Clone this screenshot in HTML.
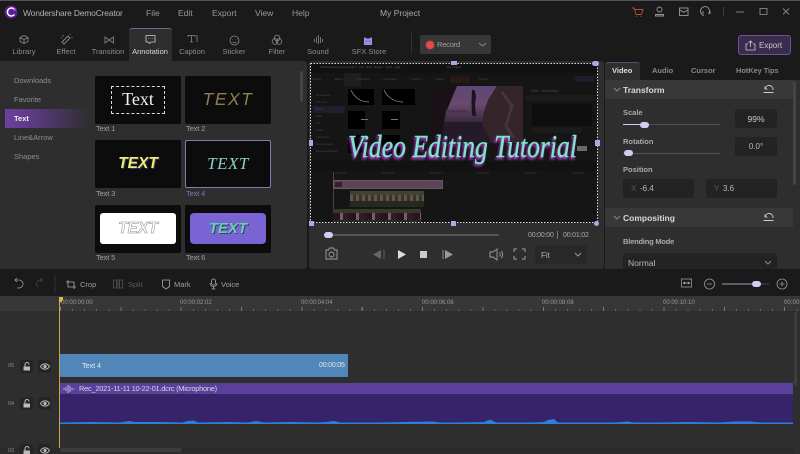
<!DOCTYPE html>
<html><head><meta charset="utf-8">
<style>
html,body{margin:0;padding:0;background:#1a1a1b;}
#p{position:relative;width:800px;height:454px;overflow:hidden;background:#1a1a1b;font-family:"Liberation Sans",sans-serif;font-size:8px;color:#a8a8a8;}
#p div{position:absolute;white-space:nowrap;box-sizing:border-box;}
#p svg{position:absolute;overflow:visible;}
.m{top:8px;font-size:8.5px;color:#999;line-height:11px;}
.t{top:47px;width:44px;text-align:center;font-size:7.5px;color:#8c8c8c;line-height:10px;}
.s{left:14px;font-size:7.5px;color:#8e8e8e;line-height:10px;}
.th{width:86px;height:48px;background:#0c0c0c;border-radius:2px;}
.tl{font-size:7.5px;color:#a0a0a0;line-height:10px;letter-spacing:-.15px;}
.b{font-size:7.5px;font-weight:bold;color:#d0d0d0;line-height:10px;}
.box{background:#232323;border-radius:2px;}
.r{top:299px;font-size:6px;color:#9a9a9a;line-height:8px;}
.ln{width:13px;height:13px;background:#242424;border-radius:3px;}
.h{background:#b8a2e6;width:5px;height:5px;}
</style></head><body><div id="p">
<div style="left:0;top:0;width:800px;height:1px;background:#55525c"></div>

<!-- title bar -->
<svg style="left:0;top:0" width="40" height="26"><circle cx="11" cy="12" r="6.5" fill="#5a1f96"/><path d="M14.5 9.5A4 4 0 1 0 14.5 14.5" fill="none" stroke="#fff" stroke-width="1.5"/><circle cx="14.5" cy="9.5" r="1.2" fill="#e060e0"/></svg>
<div style="left:23px;top:7px;font-size:8.5px;color:#b0b0b0;line-height:12px;letter-spacing:-.2px">Wondershare DemoCreator</div>
<div class="m" style="left:146px">File</div><div class="m" style="left:178px">Edit</div><div class="m" style="left:212px">Export</div><div class="m" style="left:255px">View</div><div class="m" style="left:292px">Help</div>
<div class="m" style="left:380px;color:#aaa">My Project</div>
<svg style="left:625px;top:0" width="175" height="26" fill="none" stroke="#999" stroke-width=".9">
<path d="M7 8h2l2 6.500h5.500l1.500-5H10M11 16.500h.8M15.500 16.500h.8" stroke="#c0473f"/>
<circle cx="34.500" cy="9.500" r="2.500"/><path d="M30.500 16v-1.500h8v1.500z"/>
<rect x="54.500" y="8" width="8.500" height="7.500"/><path d="M54.500 10l4.200 2.200L63 10"/>
<path d="M79 15.500A4.500 4.500 0 1 1 83.500 14M78 11v3M85 11v3"/>
<path d="M98.500 7v9" stroke="#444"/><path d="M111 12h8" stroke="#888"/><rect x="135" y="8.500" width="7" height="6" stroke="#888"/><path d="M158 8.500l6 6M164 8.500l-6 6" stroke="#888"/>
</svg>

<!-- tabs -->
<div style="left:129px;top:28px;width:43px;height:34px;background:#2e2e2e;border-top:1px solid #75688e;border-radius:3px 3px 0 0"></div>
<svg style="left:0;top:28px" width="400" height="20" fill="none" stroke="#888" stroke-width=".8">
<path d="M20 9.500l4-2 4 2v4l-4 2-4-2zM20 9.500l4 2 4-2M24 11.500v4"/>
<path d="M62 14l6-6 2 2-6 6zM63 7v1.500M70 6v1M72 9v1M61 10h1" stroke="#999"/>
<path d="M105 9v6l4.500-3zM113.500 9v6l-4.500-3z"/>
<path d="M146 7.500h9v6.500h-4l-1.500 1.500-1-1.500h-2.500zM148.500 10.500h.5M150.500 10.500h.5M152.500 10.500h.5" stroke="#ccc"/>
<path d="M188 9V7.500h7V9M191.500 7.500V14M190 14h3M197 7v7"/>
<circle cx="234.500" cy="12.500" r="4.500"/><path d="M232.500 11.500h.5M236 11.500h.5M232.500 14c1 1 3 1 4 0"/>
<circle cx="277" cy="10" r="2.800"/><circle cx="275" cy="13.500" r="2.800"/><circle cx="279" cy="13.500" r="2.800"/>
<path d="M314.500 11v3M316.500 9v6M318.500 7v9M320.500 9v6M322.500 11v3"/>
</svg>
<svg style="left:363px;top:35px" width="12" height="12"><path d="M1 2.500h1.500l1 1h3l1-1H9v7.500H1z" fill="#a78ae6"/><path d="M3 6h1M6 6h1" stroke="#443366"/></svg>
<div class="t" style="left:2px">Library</div><div class="t" style="left:44px">Effect</div><div class="t" style="left:86px">Transition</div>
<div class="t" style="left:128px;color:#d8d8d8">Annotation</div><div class="t" style="left:170px">Caption</div><div class="t" style="left:212px">Sticker</div><div class="t" style="left:255px">Filter</div><div class="t" style="left:296px">Sound</div><div class="t" style="left:347px;width:44px">SFX Store</div>

<div style="left:411px;top:33px;width:1px;height:20px;background:#333"></div>
<div style="left:420px;top:35px;width:71px;height:19px;background:#373737;border-radius:2px"></div>
<div style="left:426px;top:41px;width:8px;height:8px;background:#e04a4a;border-radius:50%;box-shadow:0 0 0 1px #6b3a3a"></div>
<div style="left:437px;top:40px;font-size:7.5px;color:#a0a0a0;line-height:10px;letter-spacing:-.2px">Record</div>
<svg style="left:478px;top:42px" width="10" height="6"><path d="M1 1l3.500 3L8 1" fill="none" stroke="#888"/></svg>
<div style="left:738px;top:35px;width:53px;height:20px;background:#3a2c4e;border:1px solid #6b5590;border-radius:3px"></div>
<svg style="left:745px;top:40px" width="12" height="11" fill="none" stroke="#ccc" stroke-width=".8"><path d="M3 4H1v6h9V4H8M5.500 7V1M3.500 3l2-2 2 2"/></svg>
<div style="left:759px;top:40px;font-size:8px;color:#c8c8c8;line-height:11px">Export</div>

<!-- library panel -->
<div style="left:0;top:61px;width:307px;height:208px;background:#2e2e2e;border-radius:0 3px 3px 0"></div>
<div style="left:129px;top:60px;width:43px;height:2px;background:#2e2e2e"></div>
<div style="left:5px;top:109px;width:85px;height:19px;background:linear-gradient(90deg,#6f3f9f 0%,#5a3a80 35%,#2e2e2e 100%)"></div>
<div class="s" style="top:76px">Downloads</div><div class="s" style="top:95px">Favorite</div><div class="s" style="top:114px;color:#eee;font-weight:bold">Text</div><div class="s" style="top:133px">Line&amp;Arrow</div><div class="s" style="top:152px">Shapes</div>
<div style="left:300px;top:71px;width:3px;height:31px;background:#444;border-radius:2px"></div>

<div class="th" style="left:95px;top:76px"></div>
<div style="left:111px;top:86px;width:54px;height:28px;border:1px dashed #ddd"></div>
<div style="left:95px;top:89px;width:86px;text-align:center;font:18px/20px 'Liberation Serif',serif;color:#f2f2f2">Text</div>
<div class="th" style="left:185px;top:76px"></div>
<div style="left:185px;top:89px;width:86px;text-align:center;font:italic 17.5px/21px 'Liberation Sans',sans-serif;letter-spacing:1.5px;color:#8f7f50">TEXT</div>
<div class="th" style="left:95px;top:140px"></div>
<div style="left:95px;top:154px;width:86px;text-align:center;font:italic bold 15.5px/19px 'Liberation Sans',sans-serif;color:#f0ec70;text-shadow:1px 1px 0 #333060">TEXT</div>
<div class="th" style="left:185px;top:140px;border:1px solid #8d72b6"></div>
<div style="left:185px;top:154px;width:86px;text-align:center;font:italic 17px/20px 'Liberation Serif',serif;color:#8fd0c6;letter-spacing:.5px">TEXT</div>
<div class="th" style="left:95px;top:205px"></div>
<div style="left:100px;top:213px;width:76px;height:31px;background:#fff;border-radius:3px"></div>
<div style="left:95px;top:219px;width:86px;text-align:center;font:italic bold 15.5px/19px 'Liberation Sans',sans-serif;color:#fff;-webkit-text-stroke:.5px #888">TEXT</div>
<div class="th" style="left:185px;top:205px"></div>
<div style="left:190px;top:213px;width:76px;height:31px;background:#7a63d2;border-radius:4px"></div>
<div style="left:185px;top:219px;width:86px;text-align:center;font:italic bold 15px/19px 'Liberation Sans',sans-serif;color:#62d5a6;text-shadow:1px 1px 0 #3b3a80">TEXT</div>
<div class="tl" style="left:96px;top:124px">Text 1</div><div class="tl" style="left:186px;top:124px">Text 2</div>
<div class="tl" style="left:96px;top:189px">Text 3</div><div class="tl" style="left:186px;top:189px;color:#8a6fb5">Text 4</div>
<div class="tl" style="left:96px;top:253px">Text 5</div><div class="tl" style="left:186px;top:253px">Text 6</div>

<!-- preview -->
<div style="left:309px;top:61px;width:295px;height:208px;background:#2e2e2e;border-radius:3px"></div>
<div style="left:310px;top:63px;width:288px;height:160px;background:#151515"></div>
<div style="left:310px;top:63px;width:288px;height:10px;background:#111"></div>
<div style="left:320px;top:65px;font-size:3px;color:#555;line-height:5px">Wondershare DemoCreator &nbsp; File &nbsp; Edit &nbsp; Export &nbsp; View &nbsp; Help</div>
<div style="left:447px;top:65px;font-size:3px;color:#555;line-height:5px">My Project</div>
<div style="left:344px;top:73px;width:17px;height:13px;background:#1e1e1e"></div>
<div style="left:312px;top:77px;font-size:3px;color:#484848;line-height:4px;word-spacing:13px">Library Effect Transition Annotation Caption Sticker Filter Sound</div>
<div style="left:450px;top:76px;width:20px;height:7px;background:#2a1818"></div>
<div style="left:575px;top:76px;width:19px;height:6px;background:#211c2c"></div>
<div style="left:313px;top:106px;width:32px;height:7px;background:#241d2e"></div>
<div style="left:316px;top:92px;font-size:3px;line-height:7px;color:#444;white-space:pre">Downloads
Favorite
Basic
Slide
Pan
Warp
Transition
Speed Ramp
Repeated Action</div>
<div style="left:348px;top:89px;width:26px;height:16px;background:#000"></div>
<div style="left:382px;top:89px;width:33px;height:16px;background:#000"></div>
<svg style="left:348px;top:89px" width="70" height="16" fill="none" stroke="#999" stroke-width=".7"><path d="M3 1C6 8 12 13 21 13M36 1C39 8 46 13 55 13"/></svg>
<div style="left:348px;top:111px;width:17px;height:18px;background:#000"></div><div style="left:382px;top:111px;width:18px;height:18px;background:#000"></div>
<div style="left:361px;top:119px;width:7px;height:1px;background:#777"></div><div style="left:391px;top:119px;width:7px;height:1px;background:#777"></div>
<div style="left:348px;top:135px;width:17px;height:18px;background:#000"></div><div style="left:382px;top:135px;width:18px;height:18px;background:#000"></div>

<svg style="left:432px;top:86px" width="91" height="57">
<defs><linearGradient id="g" x1="0" y1="0" x2="0" y2="1"><stop offset="0" stop-color="#5e4678"/><stop offset=".5" stop-color="#6a4a6e"/><stop offset="1" stop-color="#3a2a3c"/></linearGradient></defs>
<rect width="91" height="57" fill="#2a2024"/>
<path d="M25 0H65L56 14 52 26 50 36H10L14 26 20 12z" fill="url(#g)"/>
<path d="M10 36H50L56 46 62 57H8z" fill="#241a28"/>
<path d="M65 0H91V57H60L50 38 52 26 56 14z" fill="#33252a"/>
<path d="M70 6l10 14-6 20 8 12" stroke="#46343a" stroke-width="3" fill="none"/>
<path d="M0 0H25L14 26 8 57H0z" fill="#181216"/>
<path d="M40 4h2.500l1.500 6-1 10 1 10h-4l-.5-14z" fill="#1c141c"/>
<path d="M13 24h20l6 3H16zM16 29h24l2 2H18z" fill="#4a3450"/>
</svg>

<div style="left:530px;top:89px;font-size:3.5px;color:#4a4a4a;line-height:5px">Video &nbsp; Annotation</div>
<div style="left:525px;top:95px;width:70px;height:6px;background:#1b1b1b"></div>
<div style="left:532px;top:104px;width:60px;height:22px;background:#0e0e0e"></div>
<div style="left:532px;top:128px;width:50px;height:5px;background:#1b1b1b"></div>
<div style="left:577px;top:146px;width:10px;height:5px;background:#6a6a6a"></div>

<div style="left:310px;top:161px;width:288px;height:10px;background:#121212"></div>
<div style="left:333px;top:172px;width:1px;height:50px;background:#4a4236"></div>
<div style="left:335px;top:171px;font-size:3px;color:#3c3c3c;line-height:5px;word-spacing:35px">00:00:00 00:00:02 00:00:04 00:00:06 00:00:08 00:00:10</div>
<div style="left:333px;top:180px;width:110px;height:9px;background:#5c4356;border:1px solid #6d5266"></div>
<div style="left:335px;top:182px;width:7px;height:5px;background:#33222e"></div>
<div style="left:350px;top:191px;width:74px;height:16px;background:#252a1d"></div>
<div style="left:350px;top:191px;width:74px;height:4px;background:#3f442f"></div>
<div style="left:350px;top:195px;width:74px;height:6px;background:repeating-linear-gradient(90deg,#605450 0 3px,#3a3229 3px 6px)"></div>
<div style="left:333px;top:209px;width:88px;height:4px;background:#363a2a"></div>
<div style="left:333px;top:213px;width:88px;height:7px;background:repeating-linear-gradient(90deg,#2a141c 0 7px,#70606a 7px 10px,#341a24 10px 16px)"></div>
<div style="left:333px;top:220px;width:88px;height:2px;background:#252a1d"></div>

<svg style="left:310px;top:63px" width="288" height="160">
<defs><filter id="gl" x="-10%" y="-30%" width="120%" height="160%"><feGaussianBlur stdDeviation="1"/></filter></defs>
<text x="38" y="95" font-family="Liberation Serif,serif" font-style="italic" font-size="32" textLength="229" lengthAdjust="spacingAndGlyphs" fill="#a032b0" stroke="#a032b0" stroke-width="1" filter="url(#gl)" dx="-1" dy="1">Video Editing Tutorial</text>
<text x="38" y="94" font-family="Liberation Serif,serif" font-style="italic" font-size="32" textLength="229" lengthAdjust="spacingAndGlyphs" fill="#7fe3d0" stroke="#7fe3d0" stroke-width=".4">Video Editing Tutorial</text>
<rect x=".5" y=".5" width="287" height="159" fill="none" stroke="#e0e0e0" stroke-width="1" stroke-dasharray="1.5 1.5"/>
</svg>
<div class="h" style="left:451px;top:61px;height:4px;width:6px"></div>
<div class="h" style="left:592px;top:61px;border-radius:3px;width:7px"></div>
<div class="h" style="left:309px;top:140px;width:4px;height:6px"></div>
<div class="h" style="left:595px;top:140px;width:5px;height:6px"></div>
<div class="h" style="left:309px;top:221px"></div>
<div class="h" style="left:451px;top:221px"></div>
<div class="h" style="left:594px;top:221px;border-radius:3px"></div>

<div style="left:325px;top:234px;width:174px;height:2px;background:#555"></div>
<div style="left:324px;top:232px;width:9px;height:6px;background:#d6c9f4;border-radius:3px"></div>
<div style="left:528px;top:230px;font-size:7px;color:#a8a8a8;line-height:11px;letter-spacing:-.2px">00:00:00</div>
<div style="left:557px;top:231px;width:1px;height:8px;background:#777"></div>
<div style="left:563px;top:230px;font-size:7px;color:#a8a8a8;line-height:11px;letter-spacing:-.2px">00:01:02</div>
<svg style="left:320px;top:244px" width="200" height="20" fill="none" stroke="#a0a0a0" stroke-width=".9">
<path d="M6 6h2.500l1-2h4l1 2H17v9H6z"/><circle cx="11.500" cy="10.500" r="2.500"/>
<path d="M61 6v9l-8-4.500z" fill="#666" stroke="none"/><path d="M64 6v9" stroke="#666"/>
<path d="M78 6v9l8-4.500z" fill="#ddd" stroke="none"/>
<rect x="100" y="7" width="7" height="7" fill="#ccc" stroke="none"/>
<path d="M125 6v9l8-4.500z" fill="#999" stroke="none"/><path d="M123 6v9" stroke="#999"/>
<path d="M170 8h3l4-3v11l-4-3h-3zM179.500 8.500c1 1 1 3 0 4M181.500 7c1.500 2 1.500 5 0 7"/>
</svg>
<svg style="left:513px;top:248px" width="14" height="13" fill="none" stroke="#a0a0a0"><path d="M1 4V1h3M9 1h3v3M12 8v3H9M4 11H1V8"/></svg>
<div style="left:535px;top:245px;width:52px;height:19px;background:#282828;border-radius:2px"></div>
<div style="left:541px;top:250px;font-size:8px;color:#b0b0b0;line-height:11px">Fit</div>
<svg style="left:574px;top:252px" width="9" height="6"><path d="M1 1l3 3 3-3" fill="none" stroke="#999"/></svg>

<!-- right panel -->
<div style="left:605px;top:80px;width:195px;height:189px;background:#2e2e2e"></div>
<div style="left:605px;top:62px;width:35px;height:19px;background:#2e2e2e;border-top:1px solid #56506a;border-radius:3px 3px 0 0"></div>
<div class="b" style="left:612px;top:66px;color:#ddd">Video</div>
<div class="b" style="left:652px;top:66px;color:#888">Audio</div>
<div class="b" style="left:691px;top:66px;color:#888">Cursor</div>
<div class="b" style="left:736px;top:66px;color:#888;letter-spacing:-.1px">HotKey Tips</div>
<div style="left:605px;top:80px;width:188px;height:19px;background:#383838"></div>
<div style="left:605px;top:208px;width:188px;height:19px;background:#383838"></div>
<svg style="left:613px;top:87px" width="8" height="6"><path d="M1 1l3 3 3-3" fill="none" stroke="#888"/></svg>
<svg style="left:613px;top:215px" width="8" height="6"><path d="M1 1l3 3 3-3" fill="none" stroke="#888"/></svg>
<div style="left:623px;top:84px;font-size:8.5px;font-weight:bold;color:#d8d8d8;line-height:12px">Transform</div>
<div style="left:623px;top:212px;font-size:8.5px;font-weight:bold;color:#d8d8d8;line-height:12px">Compositing</div>
<svg style="left:763px;top:84px" width="12" height="11" fill="none" stroke="#ccc" stroke-width=".9"><path d="M2 5a4 4 0 0 1 8 1M.5 8.500h10M2 2.500V5h2.500"/></svg>
<svg style="left:763px;top:212px" width="12" height="11" fill="none" stroke="#ccc" stroke-width=".9"><path d="M2 5a4 4 0 0 1 8 1M.5 8.500h10M2 2.500V5h2.500"/></svg>
<div style="left:793px;top:81px;width:3px;height:104px;background:#444;border-radius:2px"></div>
<div class="b" style="left:623px;top:108px;color:#aaa">Scale</div>
<div style="left:623px;top:124px;width:97px;height:1px;background:#505050"></div>
<div style="left:623px;top:124px;width:20px;height:1px;background:#d6c9f4"></div>
<div style="left:640px;top:122px;width:9px;height:6px;background:#d6c9f4;border-radius:3px"></div>
<div class="box" style="left:735px;top:109px;width:42px;height:19px"></div>
<div style="left:735px;top:113px;width:42px;text-align:center;font-size:8.5px;color:#c8c8c8;line-height:12px">99%</div>
<div class="b" style="left:623px;top:137px;color:#aaa">Rotation</div>
<div style="left:623px;top:153px;width:97px;height:1px;background:#505050"></div>
<div style="left:624px;top:150px;width:9px;height:6px;background:#d6c9f4;border-radius:3px"></div>
<div class="box" style="left:735px;top:137px;width:42px;height:19px"></div>
<div style="left:735px;top:141px;width:42px;text-align:center;font-size:8px;color:#b8b8b8;line-height:12px">0.0°</div>
<div class="b" style="left:623px;top:165px;color:#aaa">Position</div>
<div class="box" style="left:623px;top:179px;width:71px;height:19px"></div>
<div class="box" style="left:706px;top:179px;width:71px;height:19px"></div>
<div style="left:631px;top:183px;font-size:8px;color:#555;line-height:12px">X</div>
<div style="left:640px;top:183px;font-size:8px;color:#b8b8b8;line-height:12px">-6.4</div>
<div style="left:714px;top:183px;font-size:8px;color:#555;line-height:12px">Y</div>
<div style="left:723px;top:183px;font-size:8px;color:#b8b8b8;line-height:12px">3.6</div>
<div class="b" style="left:623px;top:237px;color:#aaa;letter-spacing:-.2px">Blending Mode</div>
<div class="box" style="left:623px;top:253px;width:154px;height:16px"></div>
<div style="left:628px;top:257px;font-size:8.5px;color:#b8b8b8;line-height:12px">Normal</div>
<svg style="left:764px;top:260px" width="9" height="6"><path d="M1 1l3 3 3-3" fill="none" stroke="#888"/></svg>

<!-- timeline toolbar -->
<svg style="left:0;top:270px" width="260" height="26" fill="none" stroke="#999" stroke-width=".8">
<path d="M15 10h4a4 4 0 0 1 0 8h-2M17 8L15 10 17 12"/>
<path d="M42 10h-1a4 4 0 0 0-3 7M40.500 8.500l1.500 1.500-1.500 1.500" stroke="#4a4a4a"/>
<path d="M55 5v18" stroke="#3a3a3a"/>
<path d="M66 12h8v7M68 10v7h8" stroke="#aaa"/>
<path d="M113.500 10h3v8h-3zM119.500 10h3v8h-3zM118 9v10" stroke="#555"/>
<path d="M162.500 10h7v6.500l-3.500 2.500-3.500-2.500z" stroke="#aaa"/>
<rect x="211.500" y="9" width="4" height="6" rx="2" stroke="#aaa"/><path d="M210 13a3.500 3.500 0 0 0 7 0M213.500 16.500v2.500M211.500 19h4" stroke="#aaa"/>
</svg>
<div style="left:80px;top:279px;font-size:7.5px;color:#a0a0a0;line-height:11px">Crop</div>
<div style="left:128px;top:279px;font-size:7.5px;color:#5c5c5c;line-height:11px">Split</div>
<div style="left:174px;top:279px;font-size:7.5px;color:#a0a0a0;line-height:11px">Mark</div>
<div style="left:221px;top:279px;font-size:7.5px;color:#a0a0a0;line-height:11px">Voice</div>
<svg style="left:680px;top:274px" width="120" height="20" fill="none" stroke="#999" stroke-width=".8">
<rect x="1.500" y="5" width="10" height="8"/><path d="M3.500 9h6M4.500 8l-1 1 1 1M8.500 8l1 1-1 1" stroke="#ccc"/>
<circle cx="29.500" cy="10" r="5"/><path d="M27 10h5"/>
<path d="M42 10h30" stroke="#d6c9f4"/><path d="M76 10h13" stroke="#555"/>
<circle cx="102" cy="10" r="5"/><path d="M99.500 10h5M102 7.500v5"/></svg>
<div style="left:752px;top:281px;width:9px;height:6px;background:#d6c9f4;border-radius:3px"></div>

<!-- timeline -->
<div style="left:0;top:296px;width:800px;height:158px;background:#2e2e2e"></div>
<div style="left:0;top:296px;width:800px;height:15px;background:#373737"></div>
<div style="left:60px;top:309px;width:740px;height:2px;background:repeating-linear-gradient(90deg,#666 0 1px,transparent 1px 12.07px)"></div>
<div style="left:60px;top:307px;width:740px;height:4px;background:repeating-linear-gradient(90deg,#777 0 1px,transparent 1px 60.35px)"></div>
<div class="r" style="left:61px">00:00:00:00</div><div class="r" style="left:180px">00:00:02:02</div><div class="r" style="left:301px">00:00:04:04</div><div class="r" style="left:422px">00:00:06:06</div><div class="r" style="left:542px">00:00:08:08</div><div class="r" style="left:663px">00:00:10:10</div><div class="r" style="left:784px">00:00:</div>

<div style="left:60px;top:354px;width:288px;height:23px;background:#5087b8;border-radius:1px"></div>
<div style="left:82px;top:361px;font-size:7.5px;color:#dfe8f0;line-height:10px;letter-spacing:-.2px">Text 4</div>
<div style="left:319px;top:361px;font-size:7px;color:#dfe8f0;line-height:10px;letter-spacing:-.2px">00:00:05</div>
<div style="left:60px;top:383px;width:733px;height:11px;background:#5a4098"></div>
<div style="left:60px;top:394px;width:733px;height:30px;background:#36246a"></div>
<svg style="left:63px;top:385px" width="12" height="8" stroke="#d8d0ee" stroke-width=".8"><path d="M1 3v2M3 2v4M5 0v8M7 1v6M9 3v2M11 3.500v1"/></svg>
<div style="left:79px;top:384px;font-size:7.5px;color:#d8d4e6;line-height:10px;letter-spacing:-.28px">Rec_2021-11-11 10-22-01.dcrc (Microphone)</div>
<svg style="left:60px;top:418px" width="733" height="6"><path fill="#2f7fd8" d="M0 6V4.500L30 4 60 4.500 66 3.500 70 3 74 4 100 4 122 4.500 128 3 134 2.500 138 4.500 170 4 188 4.500 196 3 204 4.500 230 4 258 4.500 266 4 274 3 280 4.500 320 4.500 344 4 372 3.500 380 4.500 400 4.500 424 4 430 1.500 436 4.500 470 4.500 484 4 488 2 494 1 498 4.500 520 4.500 555 4.500 568 3.500 574 4.500 600 4.500 628 4 660 4.500 674 3.500 690 3.500 700 4.500 733 4.500V6z"/></svg>
<div style="left:59px;top:298px;width:1px;height:150px;background:#c9a24a"></div>
<svg style="left:59px;top:297px" width="5" height="6"><path d="M0 0h4v3L1.500 5.500 0 5z" fill="#e0b54e"/></svg>
<div style="left:0;top:448px;width:794px;height:5px;background:#2a2a2a"></div>
<div style="left:60px;top:448px;width:122px;height:4px;background:#3d3d3d;border-radius:2px"></div>
<div style="left:794px;top:312px;width:3px;height:74px;background:#3d3d3d;border-radius:2px"></div>

<div style="left:8px;top:362px;font-size:5.5px;color:#8a8a8a;line-height:8px">05</div>
<div style="left:8px;top:400px;font-size:5.5px;color:#8a8a8a;line-height:8px">04</div>
<div style="left:8px;top:447px;font-size:5.5px;color:#8a8a8a;line-height:8px">03</div>
<div class="ln" style="left:20px;top:360px"></div><div class="ln" style="left:38px;top:360px"></div>
<div class="ln" style="left:20px;top:397px"></div><div class="ln" style="left:38px;top:397px"></div>
<div class="ln" style="left:20px;top:444px"></div><div class="ln" style="left:38px;top:444px"></div>
<svg style="left:20px;top:360px" width="34" height="94">
<path d="M3.500 6.500h6.500v4H3.500z" fill="#bbb"/><path d="M5 6.500V4.500a2 2 0 0 1 4 0" fill="none" stroke="#bbb"/>
<path d="M3.500 43.500h6.500v4H3.500z" fill="#bbb"/><path d="M5 43.500v-2a2 2 0 0 1 4 0" fill="none" stroke="#bbb"/>
<path d="M3.500 90.500h6.500v4H3.500z" fill="#bbb"/><path d="M5 90.500v-2a2 2 0 0 1 4 0" fill="none" stroke="#bbb"/>
<g fill="none" stroke="#bbb"><path d="M20.500 6.500c2-3.500 7-3.500 9 0-2 3.500-7 3.500-9 0z"/><circle cx="25" cy="6.500" r="1.100" fill="#bbb"/>
<path d="M20.500 43.500c2-3.500 7-3.500 9 0-2 3.500-7 3.500-9 0z"/><circle cx="25" cy="43.500" r="1.100" fill="#bbb"/>
<path d="M20.500 90.500c2-3.500 7-3.500 9 0-2 3.500-7 3.500-9 0z"/><circle cx="25" cy="90.500" r="1.100" fill="#bbb"/></g>
</svg>
</div></body></html>
